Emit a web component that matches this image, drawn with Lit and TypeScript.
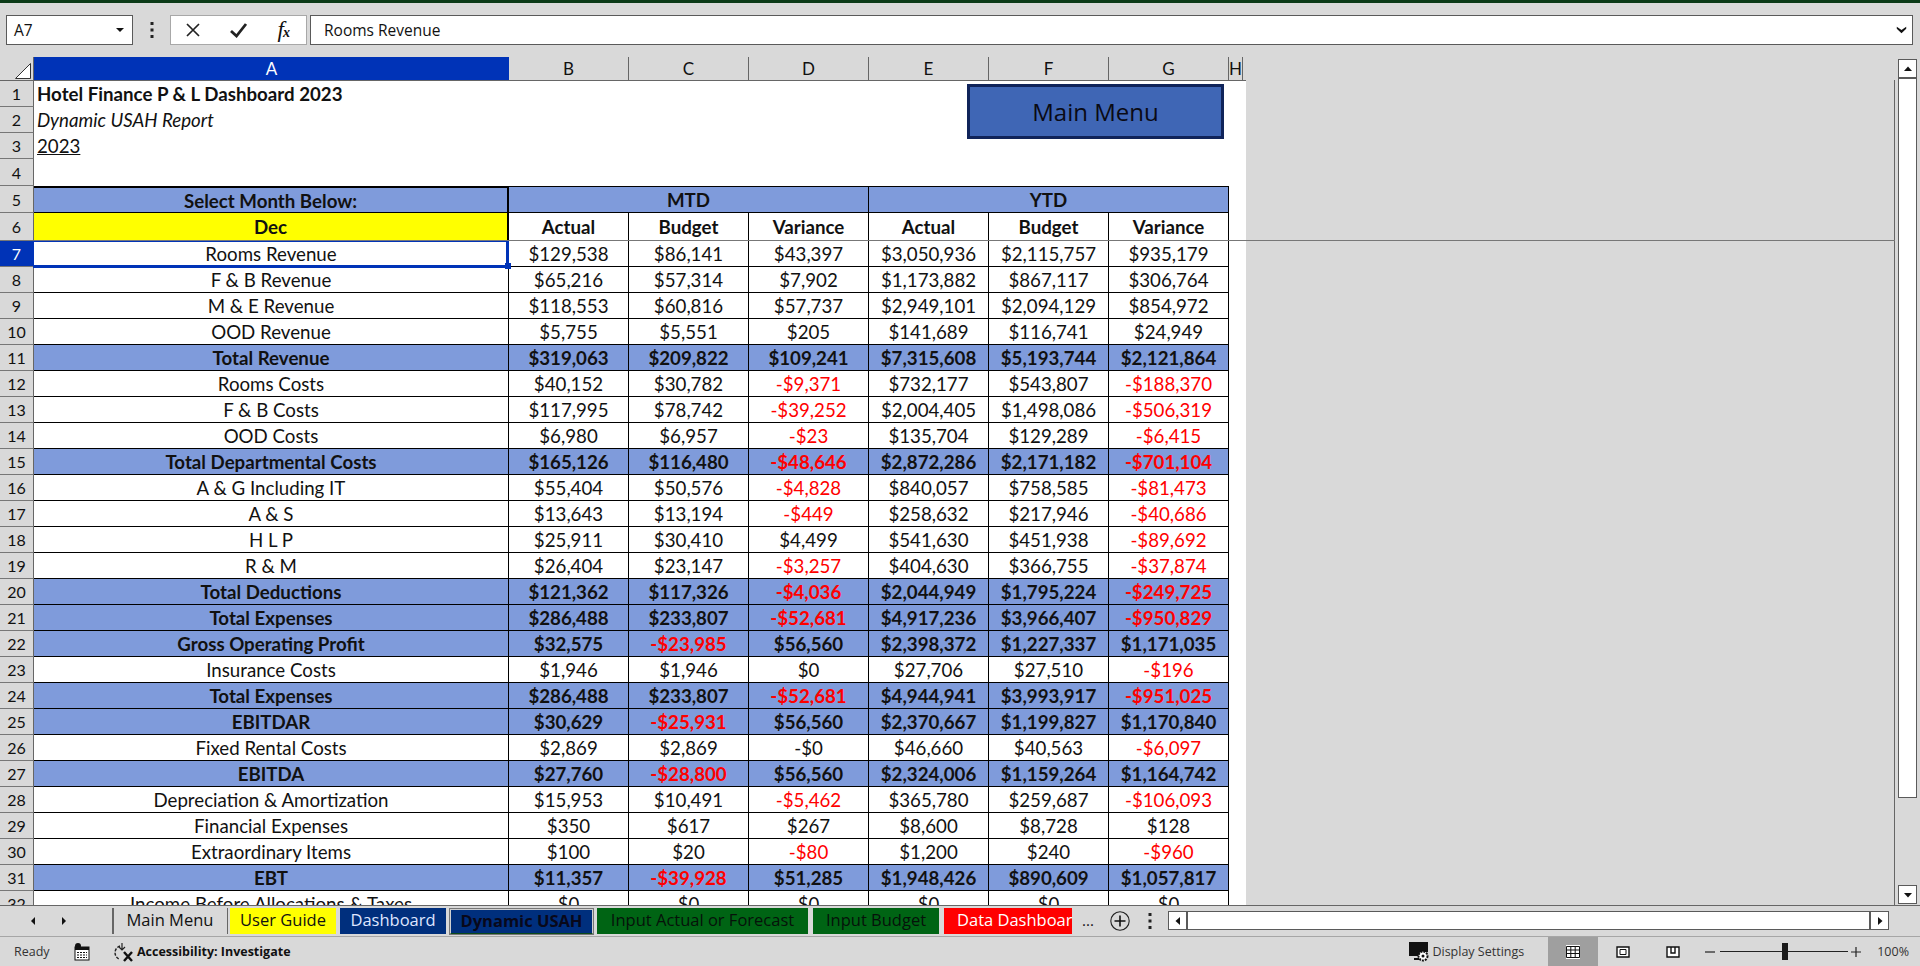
import { LitElement, html, css, svg } from "lit";
import { customElement } from "lit/decorators.js";

type Row = { n: number; label: string; v: string[]; total?: boolean };
const raw: [string, string, boolean?][] = [
  ["Rooms Revenue", "$129,538 $86,141 $43,397 $3,050,936 $2,115,757 $935,179"],
  ["F & B Revenue", "$65,216 $57,314 $7,902 $1,173,882 $867,117 $306,764"],
  ["M & E Revenue", "$118,553 $60,816 $57,737 $2,949,101 $2,094,129 $854,972"],
  ["OOD Revenue", "$5,755 $5,551 $205 $141,689 $116,741 $24,949"],
  ["Total Revenue", "$319,063 $209,822 $109,241 $7,315,608 $5,193,744 $2,121,864", true],
  ["Rooms Costs", "$40,152 $30,782 -$9,371 $732,177 $543,807 -$188,370"],
  ["F & B Costs", "$117,995 $78,742 -$39,252 $2,004,405 $1,498,086 -$506,319"],
  ["OOD Costs", "$6,980 $6,957 -$23 $135,704 $129,289 -$6,415"],
  ["Total Departmental Costs", "$165,126 $116,480 -$48,646 $2,872,286 $2,171,182 -$701,104", true],
  ["A & G Including IT", "$55,404 $50,576 -$4,828 $840,057 $758,585 -$81,473"],
  ["A & S", "$13,643 $13,194 -$449 $258,632 $217,946 -$40,686"],
  ["H L P", "$25,911 $30,410 $4,499 $541,630 $451,938 -$89,692"],
  ["R & M", "$26,404 $23,147 -$3,257 $404,630 $366,755 -$37,874"],
  ["Total Deductions", "$121,362 $117,326 -$4,036 $2,044,949 $1,795,224 -$249,725", true],
  ["Total Expenses", "$286,488 $233,807 -$52,681 $4,917,236 $3,966,407 -$950,829", true],
  ["Gross Operating Profit", "$32,575 -$23,985 $56,560 $2,398,372 $1,227,337 $1,171,035", true],
  ["Insurance Costs", "$1,946 $1,946 $0 $27,706 $27,510 -$196"],
  ["Total Expenses", "$286,488 $233,807 -$52,681 $4,944,941 $3,993,917 -$951,025", true],
  ["EBITDAR", "$30,629 -$25,931 $56,560 $2,370,667 $1,199,827 $1,170,840", true],
  ["Fixed Rental Costs", "$2,869 $2,869 -$0 $46,660 $40,563 -$6,097"],
  ["EBITDA", "$27,760 -$28,800 $56,560 $2,324,006 $1,159,264 $1,164,742", true],
  ["Depreciation & Amortization", "$15,953 $10,491 -$5,462 $365,780 $259,687 -$106,093"],
  ["Financial Expenses", "$350 $617 $267 $8,600 $8,728 $128"],
  ["Extraordinary Items", "$100 $20 -$80 $1,200 $240 -$960"],
  ["EBT", "$11,357 -$39,928 $51,285 $1,948,426 $890,609 $1,057,817", true],
  ["Income Before Allocations & Taxes", "$0 $0 $0 $0 $0 $0"],
];
const rows: Row[] = raw.map((r, i) => ({ n: i + 7, label: r[0], v: r[1].split(" "), total: !!r[2] }));

const tri = (d: string) => svg`<path d=${d} fill="#111"/>`;

@customElement("app-root")
export class AppRoot extends LitElement {
  static styles = css`
    :host { display: flex; flex-direction: column; width: 1920px; height: 966px; overflow: hidden; background: #d9d9d9; font-family: "Open Sans", sans-serif; color: #111; position: relative; }
    svg { display: block; }
    .ribbon-edge { height: 3px; background: #0b3a17; flex: none; }
    .fbar { display: flex; align-items: stretch; height: 30px; margin-top: 12px; padding-left: 6px; flex: none; }
    .box { background: #fff; border: 1.5px solid #5a5a5a; box-sizing: border-box; display: flex; align-items: center; }
    .namebox { width: 127px; padding: 0 7px; justify-content: space-between; font-size: 15.5px; }
    .dots { width: 37px; display: flex; align-items: center; justify-content: center; }
    .fx { width: 137px; border-color: #a8a8a8; justify-content: space-between; padding: 0 16px 0 14px; font-family: "Liberation Serif", serif; font-style: italic; font-size: 23px; }
    .fx sub { font-size: 14px; font-weight: 700; vertical-align: baseline; margin-left: -1px; }
    .formula { width: 1603px; margin-left: 3px; padding: 0 5px 0 13px; justify-content: space-between; font-size: 15.5px; }
    .main { flex: none; height: 848px; margin-top: 12px; display: flex; }
    .sheet { width: 1895px; position: relative; overflow: hidden; flex: none; }
    .sheet::after { content: ""; position: absolute; right: 0; top: 23px; bottom: 0; width: 1px; background: #666; }
    .grid { display: grid; grid-template-columns: 34px 475px repeat(6, 120px) 17px; grid-template-rows: 24px 26px 26px 26px 27px 27px 28px repeat(26, 26px); font-family: Lato, sans-serif; font-size: 18.7px; width: 1246px; }
    .grid > div { box-sizing: border-box; display: flex; align-items: center; justify-content: center; white-space: nowrap; overflow: hidden; }
    .ch { background: #d9d9d9; border-right: 1px solid #666; border-bottom: 1px solid #666; font-size: 17px; }
    .ch.on { background: #0033b7; color: #fff; border-right: none; }
    .ch.h { border-right: none; justify-content: flex-start !important; }
    .ch.h span { width: 14px; height: 100%; box-sizing: border-box; border-right: 1px solid #666; display: flex; align-items: center; justify-content: center; }
    .corner { align-items: flex-end !important; justify-content: flex-end !important; padding: 0 2px 1px 0; }
    .rh { background: #d9d9d9; border-right: 1px solid #666; border-bottom: 1px solid #777; font-size: 16px; }
    .rh.on { background: #0033b7; color: #fff; }
    .title { grid-column: 2 / span 8; background: #fff; justify-content: flex-start !important; padding-left: 3px; }
    .t1 { font-weight: 700; }
    .t2 { font-style: italic; }
    .t3 span { text-decoration: underline; }
    .c { background: #fff; border-right: 1px solid #000; border-bottom: 1px solid #000; padding-top: 1px; }
    .b { font-weight: 700; }
    .blue { background: #7f9bdb; }
    .yellow { background: #ff0; }
    .top { border-top: 1px solid #000; }
    .thick-t { border-top: 2px solid #000; }
    .thick-r { border-right: 2px solid #000; }
    .m3 { grid-column: span 3; }
    .neg { color: #f00; }
    .pad { background: #fff; }
    .sel { position: relative; overflow: visible !important; }
    .sel::before { content: ""; position: absolute; z-index: 2; left: -1px; right: -1px; top: 0; bottom: -2px; border: 2px solid #0033b7; border-width: 1px 3px 3px 1px; pointer-events: none; }
    .sel::after { content: ""; position: absolute; z-index: 3; right: -3px; bottom: -3px; width: 6px; height: 6px; background: #0033b7; }
    .freeze { position: absolute; left: 34px; right: 0; top: 183px; height: 1px; background: #777; z-index: 1; }
    .mm { position: absolute; left: 967px; top: 27px; width: 257px; height: 55px; box-sizing: border-box; background: #3f66b5; border: 3px solid #10245a; display: flex; align-items: center; justify-content: center; font-size: 24px; color: #0a0a14; z-index: 4; }
    .vscroll { width: 25px; display: flex; flex-direction: column; padding: 2px 0 1px 3px; box-sizing: border-box; flex: none; }
    .sb { width: 19px; height: 19px; background: #fff; border: 1px solid #5a5a5a; box-sizing: border-box; display: flex; align-items: center; justify-content: center; flex: none; }
    .vthumb { width: 19px; height: 720px; background: #fff; border: 1px solid #5a5a5a; box-sizing: border-box; }
    .vgap { flex: 1; }
    .tabs { flex: none; height: 32px; box-sizing: border-box; border-top: 1.5px solid #666; border-bottom: 1.5px solid #a6a6a6; display: flex; padding-top: 2px; position: relative; font-size: 16.5px; }
    .nav { width: 112px; display: flex; align-items: center; justify-content: flex-start; gap: 21px; padding-left: 28px; box-sizing: border-box; height: 26px; }
    .sep { width: 1.5px; height: 26px; background: #666; flex: none; }
    .tab { height: 26px; display: flex; align-items: center; justify-content: center; white-space: nowrap; overflow: hidden; box-sizing: border-box; flex: none; padding-bottom: 3px; }
    .t-main { width: 113px; }
    .t-guide { width: 106px; background: #ff0; margin-left: 2px; }
    .t-dash { width: 106px; background: #002f7d; color: #dfe6ff; margin-left: 4px; }
    .t-dyn { width: 145px; margin-left: 3px; background: #002f7d; color: #08081a; font-weight: 700; border: 2px solid #d0d0d0; outline: 1px solid #777; outline-offset: -1px; border-bottom: 2px solid #0b4a1a; height: 27px; font-size: 16.5px; }
    .t-act { width: 211px; margin-left: 3px; background: #006414; color: #06120a; }
    .t-bud { width: 126px; margin-left: 5px; background: #006414; color: #06120a; }
    .t-data { width: 128px; margin-left: 5px; background: #f00; color: #fff; justify-content: flex-start; padding-left: 13px; }
    .more { width: 32px; display: flex; align-items: center; justify-content: center; height: 26px; font-size: 15px; padding-bottom: 2px; box-sizing: border-box; }
    .plus { margin-left: 6px; height: 26px; display: flex; align-items: center; }
    .dots2 { margin-left: 18px; height: 26px; display: flex; align-items: center; }
    .hs { display: flex; margin-left: 16px; margin-top: 3px; height: 19px; }
    .htrack { width: 683px; height: 19px; background: #fff; border: 1px solid #5a5a5a; box-sizing: border-box; }
    .status { flex: 1; display: flex; align-items: center; font-size: 12.5px; position: relative; }
    .ready { margin-left: 14px; width: 60px; color: #333; }
    .acc { display: flex; align-items: center; gap: 2px; margin-left: 23px; font-weight: 700; }
    .cal { margin-left: 0; }
    .grow { flex: 1; }
    .disp { display: flex; align-items: center; gap: 3px; color: #333; }
    .view { width: 50px; height: 100%; display: flex; align-items: center; justify-content: center; }
    .view.on { background: #9f9f9f; margin-left: 24px; }
    .zoom { display: flex; align-items: center; margin-left: 7px; }
    .slider { width: 128px; height: 1.5px; background: #222; position: relative; margin: 0 3px 0 5px; }
    .slider i { position: absolute; left: 62px; top: -8px; width: 6px; height: 17px; background: #1a1a1a; }
    .pct { margin-left: 16px; margin-right: 11px; color: #333; }
  `;

  private arrow(d: string, w = 10, h = 10) {
    return html`<svg width=${w} height=${h} viewBox="0 0 10 10">${tri(d)}</svg>`;
  }

  render() {
    const cols = ["B", "C", "D", "E", "F", "G"];
    const heads = ["Actual", "Budget", "Variance", "Actual", "Budget", "Variance"];
    return html`
      <div class="ribbon-edge"></div>
      <div class="fbar">
        <div class="box namebox"><span>A7</span>${this.arrow("M1 3 H9 L5 7 Z", 10, 10)}</div>
        <div class="dots"><svg width="4" height="16" viewBox="0 0 4 16"><rect x="0.5" y="0" width="3" height="3" fill="#222"/><rect x="0.5" y="6.5" width="3" height="3" fill="#222"/><rect x="0.5" y="13" width="3" height="3" fill="#222"/></svg></div>
        <div class="box fx">
          <svg width="16" height="16" viewBox="0 0 16 16"><path d="M2 2 L14 14 M14 2 L2 14" stroke="#222" stroke-width="1.7" fill="none"/></svg>
          <svg width="18" height="16" viewBox="0 0 18 16"><path d="M1 9 L6.5 14 L16 2" stroke="#222" stroke-width="2.8" fill="none"/></svg>
          <span>f<sub>x</sub></span>
        </div>
        <div class="box formula"><span>Rooms Revenue</span><svg width="11" height="8" viewBox="0 0 14 10"><path d="M1 1 L7 5 L13 1 L13 3.5 L7 9 L1 3.5 Z" fill="#111"/></svg></div>
      </div>
      <div class="main">
        <div class="sheet">
          <div class="grid">
            <div class="ch corner"><svg width="16" height="16" viewBox="0 0 16 16"><path d="M0.5 15.5 L15.5 0.5 V15.5 Z" fill="#fff" stroke="#333"/></svg></div>
            <div class="ch on">A</div>
            ${cols.map((c) => html`<div class="ch">${c}</div>`)}
            <div class="ch h"><span>H</span></div>

            <div class="rh">1</div><div class="title t1">Hotel Finance P &amp; L Dashboard 2023</div>
            <div class="rh">2</div><div class="title t2">Dynamic USAH Report</div>
            <div class="rh">3</div><div class="title t3"><span>2023</span></div>
            <div class="rh">4</div><div class="title"></div>

            <div class="rh">5</div>
            <div class="c b blue thick-t thick-r">Select Month Below:</div>
            <div class="c b blue top m3">MTD</div>
            <div class="c b blue top m3">YTD</div>
            <div class="pad"></div>

            <div class="rh">6</div>
            <div class="c b yellow thick-r">Dec</div>
            ${heads.map((h) => html`<div class="c b">${h}</div>`)}
            <div class="pad"></div>

            ${rows.map((r) => html`
              <div class="rh ${r.n === 7 ? "on" : ""}">${r.n}</div>
              <div class="c ${r.total ? "b blue" : ""} ${r.n === 7 ? "sel" : ""}">${r.label}</div>
              ${r.v.map((v) => html`<div class="c ${r.total ? "b blue" : ""} ${v.startsWith("-") && v !== "-$0" ? "neg" : ""}">${v}</div>`)}
              <div class="pad"></div>
            `)}
          </div>
          <div class="freeze"></div>
          <div class="mm">Main Menu</div>
        </div>
        <div class="vscroll">
          <div class="sb">${this.arrow("M1 7 L5 2.5 L9 7 Z", 10, 10)}</div>
          <div class="vthumb"></div>
          <div class="vgap"></div>
          <div class="sb">${this.arrow("M1 3 H9 L5 7.5 Z", 10, 10)}</div>
        </div>
      </div>
      <div class="tabs">
        <div class="nav">${this.arrow("M7 1 V9 L3 5 Z")}${this.arrow("M3 1 V9 L7 5 Z")}</div>
        <div class="sep"></div>
        <div class="tab t-main">Main Menu</div>
        <div class="sep"></div>
        <div class="tab t-guide">User Guide</div>
        <div class="tab t-dash">Dashboard</div>
        <div class="tab t-dyn">Dynamic USAH</div>
        <div class="tab t-act">Input Actual or Forecast</div>
        <div class="tab t-bud">Input Budget</div>
        <div class="tab t-data">Data Dashboard</div>
        <div class="more">...</div>
        <div class="plus"><svg width="20" height="20" viewBox="0 0 20 20"><circle cx="10" cy="10" r="9.2" fill="none" stroke="#222" stroke-width="1.1"/><path d="M10 4.5 V15.5 M4.5 10 H15.5" stroke="#111" stroke-width="1.6"/></svg></div>
        <div class="dots2"><svg width="4" height="16" viewBox="0 0 4 16"><rect x="0.5" y="0" width="3" height="3" fill="#222"/><rect x="0.5" y="6.5" width="3" height="3" fill="#222"/><rect x="0.5" y="13" width="3" height="3" fill="#222"/></svg></div>
        <div class="hs">
          <div class="sb">${this.arrow("M7 1 V9 L2.5 5 Z")}</div>
          <div class="htrack"></div>
          <div class="sb">${this.arrow("M3 1 V9 L7.5 5 Z")}</div>
        </div>
      </div>
      <div class="status">
        <span class="ready">Ready</span>
        <svg class="cal" width="16" height="18" viewBox="0 0 16 18"><circle cx="4" cy="3" r="3" fill="#111"/><rect x="1" y="4" width="14" height="13" fill="#fff" stroke="#111"/><rect x="1" y="4" width="14" height="3" fill="#111"/><path d="M3 9.5 H13 M3 12 H13 M3 14.5 H13" stroke="#111" stroke-dasharray="2 1"/></svg>
        <div class="acc">
          <svg width="22" height="20" viewBox="0 0 22 20"><path d="M7 4 A7 7 0 0 0 6 17" fill="none" stroke="#222" stroke-width="1.4" stroke-dasharray="3 1.4"/><path d="M9 1 V8 M6 5 L9 8 L12 5" stroke="#222" stroke-width="1.2" fill="none"/><path d="M11 10 L19 19 M19 10 L11 19" stroke="#111" stroke-width="2.4"/></svg>
          <span>Accessibility: Investigate</span>
        </div>
        <div class="grow"></div>
        <div class="disp">
          <svg width="20" height="22" viewBox="0 0 20 22"><path d="M0 1 H19 V11 H13 L10 15 H0 Z" fill="#111"/><path d="M5 17 H10 V19 H5 Z" fill="#111"/><circle cx="14" cy="15" r="4.5" fill="#fff" stroke="#111" stroke-width="2" stroke-dasharray="2 1"/><circle cx="14" cy="15" r="1.5" fill="#111"/></svg>
          <span>Display Settings</span>
        </div>
        <div class="view on"><svg width="14" height="14" viewBox="0 0 14 14"><rect width="14" height="14" fill="#fff"/><path d="M0.5 1.5 H13.5 V12.5 H0.5 Z M0.5 5 H13.5 M0.5 8.5 H13.5 M4.8 1.5 V12.5 M9.2 1.5 V12.5" fill="none" stroke="#111"/></svg></div>
        <div class="view"><svg width="14" height="12" viewBox="0 0 14 12"><path d="M1 1 H13 V11 H1 Z" fill="#fff" stroke="#111" stroke-width="1.4"/><path d="M4 3.5 H10 V8.5 H4 Z" fill="none" stroke="#111"/></svg></div>
        <div class="view"><svg width="14" height="12" viewBox="0 0 14 12"><path d="M1 1 H13 V11 H1 Z" fill="#fff" stroke="#111" stroke-width="1.4"/><path d="M5 1 V7 H9 V1" fill="none" stroke="#111" stroke-width="1.4"/></svg></div>
        <div class="zoom">
          <svg width="10" height="10" viewBox="0 0 10 10"><path d="M0 5 H10" stroke="#222" stroke-width="1.2"/></svg>
          <div class="slider"><i></i></div>
          <svg width="10" height="10" viewBox="0 0 10 10"><path d="M0 5 H10 M5 0 V10" stroke="#222" stroke-width="1.2"/></svg>
        </div>
        <span class="pct">100%</span>
      </div>
    `;
  }
}
